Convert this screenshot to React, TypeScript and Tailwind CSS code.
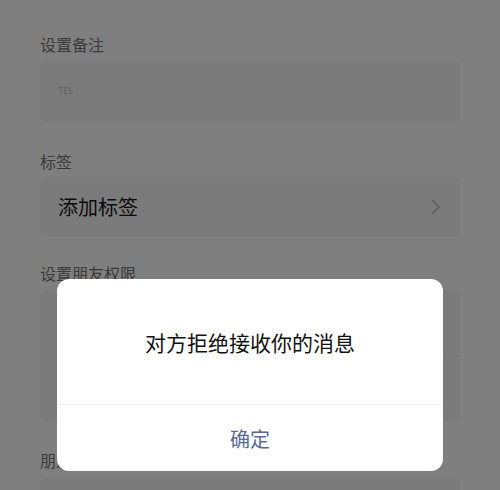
import React from 'react';

const font = { fontFamily: '"Noto Sans CJK SC", "Noto Sans", sans-serif' };

function Label({ text, className = '' }: { text: string; className?: string }) {
  return <div className={`text-[16px] leading-[20px] text-[#747474] ${className}`}>{text}</div>;
}

export default function App() {
  return (
    <div className="relative h-[490px] w-[500px] overflow-hidden bg-white" style={font}>
      {/* Page underneath */}
      <div className="px-[40px] pt-[34px]">
        <Label text="设置备注" />
        <div className="mt-[6px] flex h-[62px] items-center rounded-[6px] bg-[#f6f6f6] px-[18px]">
          <span className="text-[9px] text-[#c4c4c4]">TEL</span>
        </div>

        <Label text="标签" className="mt-[29px]" />
        <div className="mt-[6px] flex h-[60px] items-center justify-between rounded-[6px] bg-[#f6f6f6] pl-[18px] pr-[19px]">
          <span className="text-[20px] leading-[24px] text-[#161616]">添加标签</span>
          <svg width="10" height="16" viewBox="0 0 10 16" fill="none">
            <path d="M1.5 1.5L8 8l-6.5 6.5" stroke="#b4b4b4" strokeWidth="1.5" strokeLinecap="round" strokeLinejoin="round" />
          </svg>
        </div>

        <Label text="设置朋友权限" className="mt-[26px]" />
        <div className="mt-[7px] flex flex-col rounded-[6px] bg-[#f6f6f6]">
          <div className="h-[67px] border-b border-[#eaeaea]" />
          <div className="h-[65px]" />
        </div>

        <Label text="朋友权限" className="mt-[28px]" />
        <div className="mt-[8px] h-[60px] rounded-[6px] bg-[#f6f6f6]" />
      </div>

      {/* Mask + dialog */}
      <div className="absolute inset-0 bg-black/50">
        <div className="absolute left-[57px] top-[279px] w-[386px] overflow-hidden rounded-[12px] bg-white">
          <div className="flex h-[125px] items-center justify-center pt-[2px] text-[21px] text-[#111]">
            对方拒绝接收你的消息
          </div>
          <div className="flex h-[67px] items-center justify-center border-t border-[#f2f2f2] pt-[2px] text-[20px] text-[#576b95]">
            确定
          </div>
        </div>
      </div>
    </div>
  );
}
